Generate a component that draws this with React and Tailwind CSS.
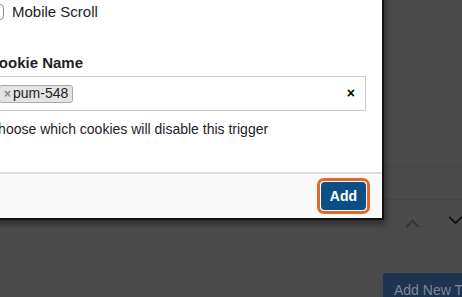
import React from "react";

const font = { fontFamily: '"Liberation Sans", Arial, sans-serif' };

const Chevron = ({ up, className }) => (
  <svg viewBox="0 0 16 10" className={className} fill="none" stroke="currentColor" strokeWidth="2">
    <path d={up ? "M1 9 L8 2 L15 9" : "M1 1 L8 8 L15 1"} />
  </svg>
);

export default function App() {
  return (
    <div className="relative w-[462px] h-[297px] overflow-hidden bg-[#4b4b4b]" style={font}>
      {/* page behind the overlay */}
      <div className="absolute left-0 top-[166px] w-full border-t border-[#464646]" />
      <div className="absolute left-0 top-[199px] w-full border-t border-[#464646]" />
      <Chevron up className="absolute left-[405px] top-[219px] w-[15px] h-[9px] text-[#343434]" />
      <Chevron className="absolute left-[448px] top-[216px] w-[15px] h-[9px] text-[#111]" />
      <div className="absolute left-[383px] top-[273px] w-[100px] h-[30px] rounded-[3px] bg-[#1d3550] text-[#7b8797] text-[14px] pl-[11px] pt-[7px] whitespace-nowrap">
        Add New Trigger
      </div>

      {/* modal */}
      <div className="absolute left-[-16px] top-[-10px] w-[400px] h-[230px] bg-white border-r-2 border-b-2 border-[#111] shadow-[2px_4px_6px_rgba(0,0,0,0.4)] flex flex-col">
        <div className="flex-1 pl-[4px] pr-[16px] text-[#1d2327]">
          <div className="flex items-center gap-[8px] mt-[11px]">
            <div className="w-[16px] h-[16px] rounded-[4px] border border-[#8c8f94] bg-white" />
            <span className="text-[15px]">Mobile Scroll</span>
          </div>
          <div className="mt-[28px] text-[15px] font-bold">Cookie Name</div>
          <div className="mt-[2px] h-[35px] border border-[#ccc] flex items-center pl-[10px] pr-[10px]">
            <span className="flex items-center h-[18px] px-[4px] rounded-[3px] border border-[#aaa] bg-[#e4e4e4] text-[14px] text-[#222]">
              <span className="text-[#888] text-[12px] mr-[2px] font-bold">×</span>pum-548
            </span>
            <span className="ml-auto text-[14px] font-bold text-black">×</span>
          </div>
          <div className="mt-[8px] text-[14px] whitespace-nowrap">Choose which cookies will disable this trigger</div>
        </div>
        <div className="h-[46px] border-t-2 border-[#dcdcde] bg-[#f9f9f9] flex items-center justify-end pr-[12px]">
          <div className="rounded-[7px] border-[3px] border-[#e2682a] p-[1px]">
            <button className="h-[28px] px-[9px] rounded-[4px] bg-[#0b4f86] text-white text-[14px] font-bold">
              Add
            </button>
          </div>
        </div>
      </div>
    </div>
  );
}
